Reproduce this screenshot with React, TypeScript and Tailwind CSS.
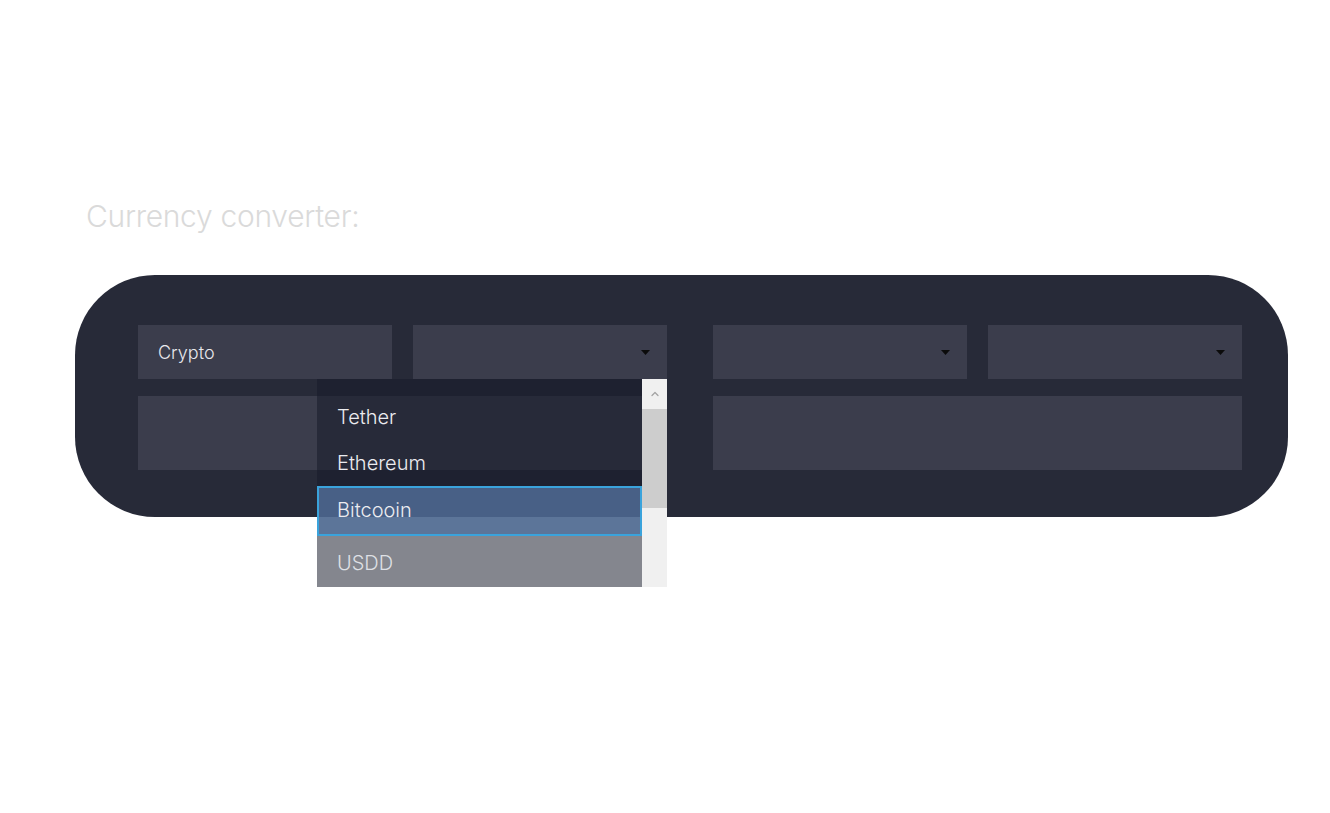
import { ChevronUp } from 'lucide-react';

const coins = ['Tether', 'Ethereum', 'Bitcooin', 'USDD'];

function Caret() {
  return (
    <svg width="9" height="5" viewBox="0 0 9 5" className="shrink-0">
      <polygon points="0,0 9,0 4.5,5" fill="#0b0b0b" />
    </svg>
  );
}

function SelectBox() {
  return (
    <div className="flex h-[54px] items-center justify-end bg-[#3b3d4c] pr-[17px]">
      <Caret />
    </div>
  );
}

function CoinList() {
  return (
    <div className="absolute left-[179px] top-[54px] z-10 flex h-[208px] w-[350px]">
      <div className="w-[325px] bg-[rgba(23,27,42,0.53)] pt-[15px] text-[20px] font-light text-[#ececf0]">
        {coins.map((coin) =>
          coin === 'Bitcooin' ? (
            <div
              key={coin}
              className="flex h-[50px] items-center border-2 border-[#3aa3dc] bg-[rgba(83,112,156,0.8)] px-[18px] pb-[3px]"
            >
              {coin}
            </div>
          ) : (
            <div
              key={coin}
              className={
                coin === 'USDD'
                  ? 'flex h-[51px] items-center px-5 pt-[3px] text-[#dfe0e5]'
                  : 'flex h-[46px] items-center px-5'
              }
            >
              {coin}
            </div>
          )
        )}
      </div>

      <div className="flex w-[25px] flex-col bg-[#f0f0f0]">
        <div className="flex h-[30px] items-center justify-center">
          <ChevronUp className="h-3 w-3 text-[#a3a3a3]" strokeWidth={2.5} />
        </div>
        <div className="h-[99px] bg-[#cdcdcd]" />
      </div>
    </div>
  );
}

export default function App() {
  return (
    <main className="min-h-screen bg-white px-[75px] pt-[196px] font-['Inter',sans-serif]">
      <h1 className="ml-[11px] text-[30px] font-light leading-[40px] tracking-[-0.3px] text-[#dadada]">
        Currency converter:
      </h1>

      <section className="mt-[39px] h-[242px] w-[1213px] rounded-[80px] bg-[#272a38] pl-[63px] pr-[46px] pt-[50px]">
        <div className="flex gap-[46px]">
          <div className="relative grid w-[529px] grid-cols-2 gap-x-[21px] gap-y-[17px]">
            <div className="flex h-[54px] items-center bg-[#3b3d4c] px-5 text-[18px] font-light text-[#e8e8ec]">
              Crypto
            </div>
            <SelectBox />
            <div className="col-span-2 h-[74px] bg-[#3b3d4c]" />
            <CoinList />
          </div>

          <div className="grid w-[529px] grid-cols-2 gap-x-[21px] gap-y-[17px]">
            <SelectBox />
            <SelectBox />
            <div className="col-span-2 h-[74px] bg-[#3b3d4c]" />
          </div>
        </div>
      </section>
    </main>
  );
}
